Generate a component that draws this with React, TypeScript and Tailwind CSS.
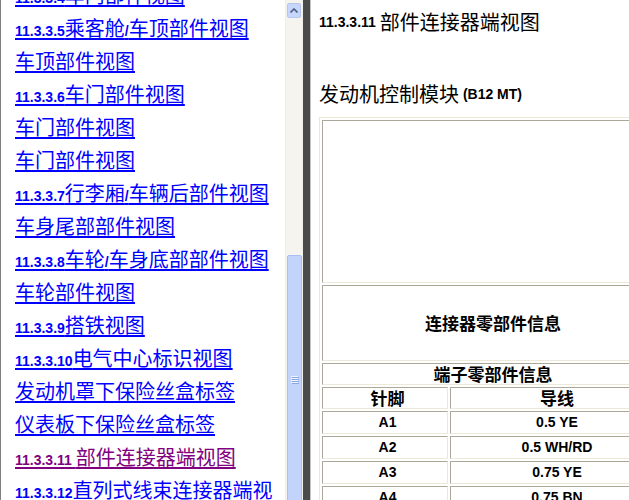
import React from 'react'

const navRows: { text: string; visited?: boolean }[] = [
  { text: '11.3.3.4车内部件视图' },
  { text: '11.3.3.5乘客舱/车顶部件视图' },
  { text: '车顶部件视图' },
  { text: '11.3.3.6车门部件视图' },
  { text: '车门部件视图' },
  { text: '车门部件视图' },
  { text: '11.3.3.7行李厢/车辆后部件视图' },
  { text: '车身尾部部件视图' },
  { text: '11.3.3.8车轮/车身底部部件视图' },
  { text: '车轮部件视图' },
  { text: '11.3.3.9搭铁视图' },
  { text: '11.3.3.10电气中心标识视图' },
  { text: '发动机罩下保险丝盒标签' },
  { text: '仪表板下保险丝盒标签' },
  { text: '11.3.3.11 部件连接器端视图', visited: true },
  { text: '11.3.3.12直列式线束连接器端视图' },
]

const pins = [
  { pin: 'A1', wire: '0.5 YE' },
  { pin: 'A2', wire: '0.5 WH/RD' },
  { pin: 'A3', wire: '0.75 YE' },
  { pin: 'A4', wire: '0.75 BN' },
]

// latin runs are set smaller and bold, like the manual's mixed fonts
function Mixed({ text }: { text: string }) {
  return (
    <>
      {text
        .split(/([\x20-\x7e]+)/)
        .filter(Boolean)
        .map((part, i) =>
          /^[\x20-\x7e]+$/.test(part) ? (
            <span key={i} className="font-['Liberation_Sans',Arial,sans-serif] text-[14px] font-bold whitespace-pre">
              {part}
            </span>
          ) : (
            <span key={i}>{part}</span>
          )
        )}
    </>
  )
}

const cell =
  'border border-t-[#aca899] border-l-[#aca899] border-r-[#ece9d8] border-b-[#ece9d8] p-0 pl-[5px] text-center align-middle'
const cjkBold = "font-['Noto_Sans_CJK_SC',sans-serif] text-[17px] font-bold text-black"
const latBold = "font-['Liberation_Sans',Arial,sans-serif] text-[14px] font-bold text-black"

function Scrollbar() {
  return (
    <div className="relative h-full w-[17px] shrink-0 border-l border-[#eeede7] bg-[#f5f4ef]">
      {/* up arrow */}
      <div className="absolute left-[1px] top-[3px] flex h-[15px] w-[14px] items-center justify-center rounded-[2px] border border-[#b4c6f0] bg-[#c6d6fc]">
        <svg width="8" height="5" viewBox="0 0 8 5">
          <path d="M0.5 4.5 L4 1 L7.5 4.5" fill="none" stroke="#4d6185" strokeWidth="1.6" />
        </svg>
      </div>
      {/* thumb */}
      <div className="absolute left-[1px] top-[255px] h-[260px] w-[15px] rounded-[2px] border border-[#a9bff3] bg-[#c2d3fc]">
        <svg className="absolute left-[3px] top-[120px]" width="8" height="9" viewBox="0 0 8 9">
          {[0, 2, 4, 6].map((y) => (
            <g key={y}>
              <rect x="0" y={y} width="7" height="1" fill="#eef3ff" />
              <rect x="1" y={y + 1} width="7" height="1" fill="#8ca6e4" />
            </g>
          ))}
        </svg>
      </div>
    </div>
  )
}

export default function App() {
  return (
    <div className="flex h-[500px] w-[629px] overflow-hidden bg-white">
      {/* Left navigation pane */}
      <div className="flex h-full w-[303px] shrink-0 border-l border-[#808080]">
        <div className="h-full w-[284px] shrink-0 overflow-hidden">
          <div className="mt-[-22px] flex flex-col">
            {navRows.map((r, i) => (
              <div key={i} className="h-[33px] pl-[14px] pt-[4px]">
                <a
                  href="#"
                  className={
                    "font-['Noto_Sans_CJK_SC',sans-serif] text-[20px] leading-[26px] underline underline-offset-2 " +
                    (r.visited ? 'text-[#800080]' : 'text-[#0000ff]')
                  }
                >
                  <Mixed text={r.text} />
                </a>
              </div>
            ))}
          </div>
        </div>
        <Scrollbar />
        <div className="h-full w-[1px] bg-[#f1f0eb]" />
      </div>

      {/* Splitter */}
      <div className="h-full w-[7px] shrink-0 bg-[#4b4b4b]" />

      {/* Right content pane */}
      <div className="h-full flex-1 overflow-hidden border-l border-[#c4c4c4] bg-white">
        <div className="ml-[8px] mt-[7px] flex h-[30px] items-center whitespace-nowrap font-['Noto_Sans_CJK_SC',sans-serif] text-[20px] text-black">
          <Mixed text="11.3.3.11 部件连接器端视图" />
        </div>
        <div className="ml-[8px] mt-[42px] flex h-[30px] items-center whitespace-nowrap font-['Noto_Sans_CJK_SC',sans-serif] text-[20px] text-black">
          <Mixed text="发动机控制模块 (B12 MT)" />
        </div>

        <table className="ml-[8px] mt-[8px] w-[343px] border-separate border-spacing-[2px] border border-t-[#ece9d8] border-l-[#ece9d8] border-r-[#aca899] border-b-[#aca899]">
          <tbody>
            <tr>
              <td colSpan={2} className={cell + ' h-[163px]'} />
            </tr>
            <tr>
              <td colSpan={2} className={cell + ' h-[76px] ' + cjkBold}>
                连接器零部件信息
              </td>
            </tr>
            <tr>
              <td colSpan={2} className={cell + ' h-[22px] leading-[20px] ' + cjkBold}>
                端子零部件信息
              </td>
            </tr>
            <tr>
              <td className={cell + ' h-[22px] w-[126px] leading-[20px] ' + cjkBold}>针脚</td>
              <td className={cell + ' h-[22px] leading-[20px] ' + cjkBold}>导线</td>
            </tr>
            {pins.map((p) => (
              <tr key={p.pin}>
                <td className={cell + ' h-[23px] ' + latBold}>{p.pin}</td>
                <td className={cell + ' h-[23px] ' + latBold}>{p.wire}</td>
              </tr>
            ))}
          </tbody>
        </table>
      </div>
    </div>
  )
}
